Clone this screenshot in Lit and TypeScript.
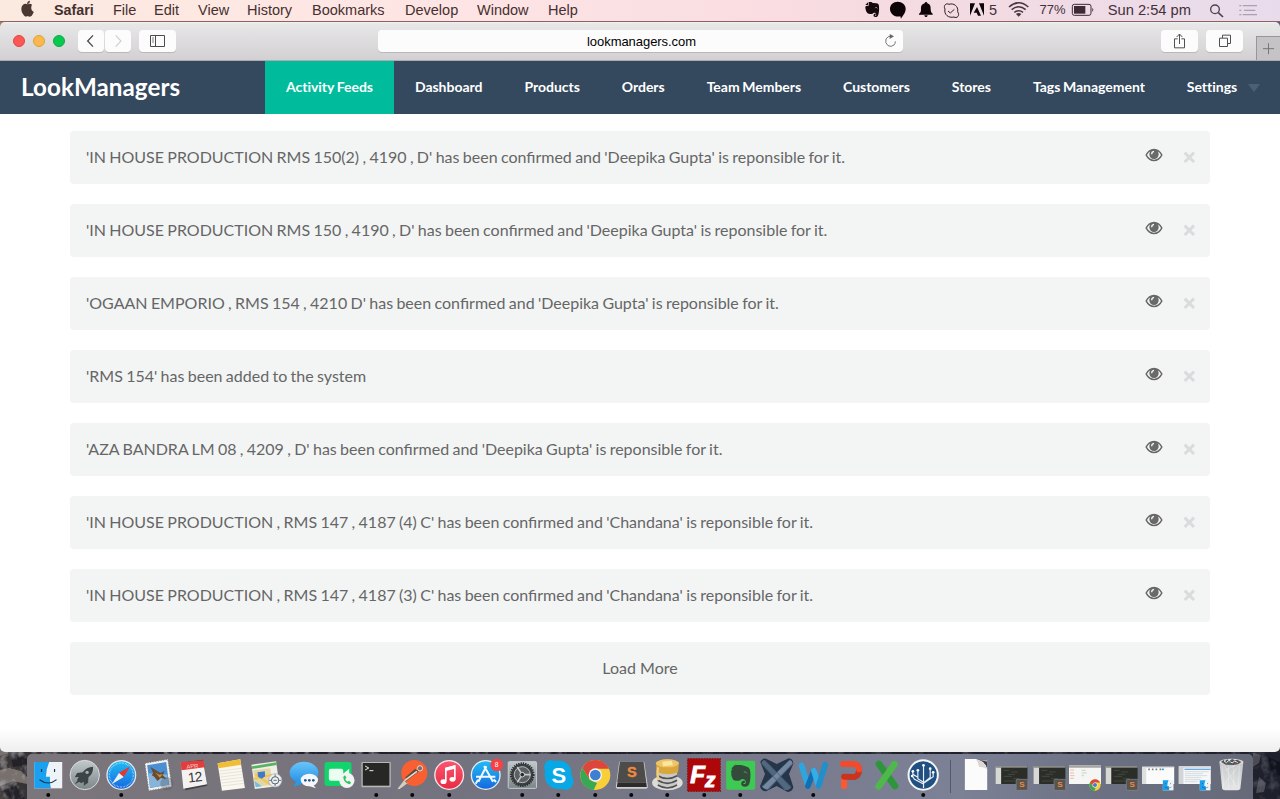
import { LitElement, html, svg, css, nothing } from "lit";
import { customElement } from "lit/decorators.js";

// Icon art is drawn on a grid of three units per pixel.
const U = 3;
const icon = (w: number, h: number, vx: number, vy: number, art: unknown) =>
  html`<svg width=${w} height=${h} viewBox="${vx} ${vy} ${w * U} ${h * U}">${art}</svg>`;

const menus: [string, number][] = [
  ["File", 41], ["Edit", 44], ["View", 49], ["History", 65], ["Bookmarks", 93],
  ["Develop", 72], ["Window", 71], ["Help", 40],
];

@customElement("mac-menubar")
class MacMenubar extends LitElement {
  static styles = css`
    :host { display: flex; height: 22px; box-sizing: border-box; border-bottom: 1px solid #8d6260;
      background: linear-gradient(90deg, #fbeae0 0, #fde8e2 200px, #fee4e5 480px, #f8dce1 800px, #f2dbe3 1000px, #e8dcec 1280px);
      font: 14.500px/20px "Liberation Sans", sans-serif; color: #45302f; white-space: nowrap; align-items: flex-start; }
    svg { display: block; flex: none; overflow: visible; }
    span { box-sizing: border-box; }
    .menu { flex: none; }
    .app { font-weight: bold; font-size: 14.300px; width: 59px; flex: none; }
    .spacer { flex: 1; }
    .status { display: flex; align-items: flex-start; width: 418px; flex: none; color: #44303a; }
    .count { width: 16px; padding-left: 2px; flex: none; }
    .pct { width: 31.700px; padding-left: 4.500px; font-size: 13px; flex: none; }
    .clock { width: 102.300px; padding-left: 7px; font-size: 14.700px; flex: none; }
  `;
  render() {
    return html`
      ${icon(54, 21, 0, 0, svg`<g fill="#4a3732"><path d="M96 14c-4-4-9-3-13-1-4-2-9-3-14 1-7 7-6 19 0 28 5 9 9 9 14 6 5 3 10 3 14-4 3-4 4-8 4-9-8-3-9-14-5-21z"/><path d="M81 12c0-6 4-10 9-10 0 6-4 10-9 10z"/></g>`)}
      <span class="app">Safari</span>
      ${menus.map(([t, w]) => html`<span class="menu" style="width:${w}px">${t}</span>`)}
      <span class="spacer"></span>
      <div class="status">
        ${icon(25, 21, 36, 0, svg`<path fill="#160a0b" d="M56 6h6c3 0 4 2 7 3l10 1c5 0 8 4 8 9 1 10 0 23-4 30-2 3-10 3-12 0-2-5 2-10 8-8v3c-4-1-5 2-3 3 4 1 4-5 1-8-4-2-7-1-9 2-4 2-12 1-16-2-4-5-6-12-6-19 1-3 5-3 10-3z"/><path fill="#160a0b" d="M46 15 54 7v8z"/><path d="M76 23q4-2 6 2" stroke="#f5dce0" stroke-width="2" fill="none"/>`)}
        ${icon(25, 21, 111, 0, svg`<path fill="#0d0507" d="M143 5c13 0 24 9 24 21 0 13-9 20-14 30l-2-7c-18 4-31-9-31-22 0-13 10-22 23-22z"/>`)}
        ${icon(26, 21, 186, 0, svg`<path fill="#0d0507" d="M228 6c2 0 4 2 4 4 9 3 10 9 10 17 0 8 2 11 6 14v3h-41v-3c5-3 6-6 6-14 0-8 1-14 11-17 0-2 2-4 4-4zm-5 40h10c0 7-10 7-10 0z"/>`)}
        ${icon(26, 21, 264, 0, svg`<path d="M285 27c-6-10 3-19 12-14 14-5 29 6 26 22 8 13-3 21-11 16-16 4-31-7-27-24zM294 33l7 6 12-11" fill="none" stroke="#2f2024" stroke-width="3"/>`)}
        ${icon(23, 21, 342, 0, svg`<path fill="#0d0507" d="M360 10h15l-15 37zm27 0h15v37zm-6 11 12 26h-9l-4-9h-9z"/>`)}
        <span class="count">5</span>
        ${icon(32, 21, 459, 0, svg`<g fill="none" stroke="#46343d" stroke-width="4.500"><path d="M477 21q29-25 58 0M485 29q21-18 42 0M493 37q13-10 26 0"/></g><path fill="#46343d" d="M498 42q8-6 16 0l-8 8z"/>`)}
        <span class="pct">77%</span>
        ${icon(34, 21, 650, 0, svg`<rect x="666" y="13" width="56" height="33" rx="6" fill="none" stroke="#3c2a34" stroke-width="3"/><rect x="671" y="18" width="34" height="23" fill="#3c2a34"/><path d="M726 24q6 5 0 11z" fill="#3c2a34"/>`)}
        <span class="clock">Sun 2:54 pm</span>
        ${icon(31, 21, 1059, 0, svg`<g fill="none" stroke="#51404d" stroke-width="4"><circle cx="1095" cy="28" r="13"/><path d="m1105 38 14 13" stroke-width="5"/></g>`)}
        ${icon(26, 21, 1152, 0, svg`<path d="M1168 17h6m4 0h43M1168 31h6m8 0h34M1168 44h6m4 0h43" stroke="#aca0b2" stroke-width="4"/>`)}
      </div>`;
  }
}

@customElement("safari-toolbar")
class SafariToolbar extends LitElement {
  static styles = css`
    :host { display: flex; align-items: flex-start; height: 39px; box-sizing: border-box; padding: 8px 0 0 13px; border-bottom: 1px solid #aeacae;
      background: linear-gradient(#f3f2f3 0, #e8e7e8 2px, #d2d0d2 38px); border-radius: 5px 5px 0 0; }
    svg { display: block; overflow: visible; }
    .lights { display: flex; gap: 8px; padding-top: 5px; width: 65px; }
    .light { width: 12px; height: 12px; border-radius: 50%; box-sizing: border-box; }
    .red { background: #fd5754; border: 1px solid #e0443f; }
    .amber { background: #fdb84b; border: 1px solid #dea03c; }
    .green { background: #08c950; border: 1px solid #0caa40; }
    .btn { height: 22px; background: #fcfcfc; border-radius: 4px; box-shadow: 0 1px 0 #bab8ba; flex: none; }
    .back { margin-right: 1px; }
    .side { margin-left: 8px; }
    .url { margin-left: 202px; width: 525px; display: flex; align-items: center; }
    .addr { flex: 1; text-align: center; padding-left: 33px; font: 13px/22px "Liberation Sans", sans-serif; color: #000; letter-spacing: -.05px; padding-top: 1px; }
    .share { margin-left: 258px; margin-right: 8px; }
    .plus { margin: 6px 0 0 13px; width: 24px; height: 24px; box-sizing: border-box; border: 1px solid #989698; border-width: 1px 0 0 1px; background: #c5c3c5; }
  `;
  render() {
    return html`
      <div class="lights"><i class="light red"></i><i class="light amber"></i><i class="light green"></i></div>
      <div class="btn back">${icon(26, 22, 234, 90, svg`<path d="m279 106-16 17 16 17" fill="none" stroke="#4b4b4b" stroke-width="4"/>`)}</div>
      <div class="btn">${icon(26, 22, 315, 90, svg`<path d="m347 106 16 17-16 17" fill="none" stroke="#cfcfcf" stroke-width="3.5"/>`)}</div>
      <div class="btn side">${icon(37, 22, 417, 90, svg`<path d="M451.500 106.500h42v33h-42zM466.500 106v34" fill="none" stroke="#4b4b4b" stroke-width="3"/><path d="M456 114h6m-6 6h6m-6 6h6" stroke="#666" stroke-width="2.500"/>`)}</div>
      <div class="btn url"><span class="addr">lookmanagers.com</span>
        ${icon(31, 22, 66, 90, svg`<path d="M124 109q-11-2-16 8-4 12 6 20 10 5 18-2 4-4 4-11" fill="none" stroke="#777" stroke-width="3"/><path d="m119 102 13 7-13 8z" fill="#666"/>`)}</div>
      <div class="btn share">${icon(37, 22, 933, 90, svg`<path d="M983 116.500h-9.500v27h30v-27H994M988.500 132v-29M980 111l8.500-9 8.500 9" fill="none" stroke="#505050" stroke-width="3"/>`)}</div>
      <div class="btn">${icon(37, 22, 1068, 90, svg`<path d="M1108.500 114.500h24v25h-24zM1117.500 114v-8.500h24v25h-9" fill="none" stroke="#505050" stroke-width="3"/>`)}</div>
      <div class="plus">${icon(23, 23, 1221, 111, svg`<path d="M1239 146h33M1255.500 129.500v33" stroke="#777" stroke-width="3"/>`)}</div>`;
  }
}

const tabs = ["Activity Feeds", "Dashboard", "Products", "Orders", "Team Members", "Customers", "Stores", "Tags Management", "Settings"];
const feeds = [
  "'IN HOUSE PRODUCTION RMS 150(2) , 4190 , D' has been confirmed and 'Deepika Gupta' is reponsible for it.",
  "'IN HOUSE PRODUCTION RMS 150 , 4190 , D' has been confirmed and 'Deepika Gupta' is reponsible for it.",
  "'OGAAN EMPORIO , RMS 154 , 4210 D' has been confirmed and 'Deepika Gupta' is reponsible for it.",
  "'RMS 154' has been added to the system",
  "'AZA BANDRA LM 08 , 4209 , D' has been confirmed and 'Deepika Gupta' is reponsible for it.",
  "'IN HOUSE PRODUCTION , RMS 147 , 4187 (4) C' has been confirmed and 'Chandana' is reponsible for it.",
  "'IN HOUSE PRODUCTION , RMS 147 , 4187 (3) C' has been confirmed and 'Chandana' is reponsible for it.",
];

@customElement("feed-page")
class FeedPage extends LitElement {
  static styles = css`
    :host { display: block; height: 691px; background: linear-gradient(#fff 0, #fff 668px, #eeeeee 691px); border-radius: 0 0 5px 5px; overflow: hidden;
      font-family: Lato, sans-serif; }
    nav { display: flex; height: 53px; background: #34495e; color: #fff; white-space: nowrap; }
    .brand { width: 244px; padding-left: 21px; font-size: 24.200px; line-height: 52px; font-weight: 700; letter-spacing: .06px; flex: none; }
    .tab { padding: 0 21px; font-size: 14px; line-height: 52px; font-weight: 700; letter-spacing: -.025px; word-spacing: -.7px; flex: none; }
    .active { background: #00bc9c; }
    .last { padding-right: 11px; }
    .caret { align-self: center; border: solid transparent; border-width: 8px 6px 0; border-top-color: #4b6075; }
    .list { display: flex; flex-direction: column; gap: 20px; padding: 17px 70px 0; }
    .row { height: 53px; box-sizing: border-box; border-radius: 4px; background: #f3f5f5; display: flex; align-items: flex-start; color: #666;
      font-size: 16px; line-height: 52px; padding-left: 16px; word-spacing: -.76px; }
    .text { flex: 1; white-space: nowrap; }
    .more { justify-content: center; padding: 0; word-spacing: 0; }
    svg { display: block; flex: none; }
  `;
  render() {
    return html`
      <nav><span class="brand">LookManagers</span>
        ${tabs.map((t, i) => html`<span class="tab ${i === 0 ? "active" : ""} ${i === tabs.length - 1 ? "last" : ""}">${t}</span>`)}
        <i class="caret"></i></nav>
      <div class="list">
        ${feeds.map((t) => html`<div class="row"><span class="text">${t}</span>
          ${icon(70, 53, 120, 33, svg`<path fill="#666" fill-rule="evenodd" d="M136 105q10-19 26-19t26 19q-10 19-26 19t-26-19zm5 0q8 14 21 14t21-14q-4-8-10-11 3 5 3 9a14 14 0 0 1-28 0q0-4 3-9-6 3-10 11z"/><circle cx="162" cy="102" r="11" fill="#6a6a6a"/><path d="M155 103q0-8 7-9" stroke="#f3f5f5" stroke-width="4" fill="none"/><path d="m254 98 28 28m0-28-28 28" stroke="#d9dcdc" stroke-width="9"/>`)}
        </div>`)}
        <div class="row more">Load More</div>
      </div>`;
  }
}

type Dock = { base: number; art: unknown; dot?: boolean };
const subBadge = (x: number) => svg`<rect x=${x} y="118" width="35" height="33" rx="3" fill="#555453" stroke="#8b8987" stroke-width="2"/><text x=${x + 17.5} y="142" font-size="24" font-weight="bold" text-anchor="middle" fill="#f58a32">S</text>`;
const editorWin = (x: number) => svg`<path d="M${x} 78h96v54h-96z" fill="#2b2d28"/><path d="M${x} 78h17v54h-17z" fill="#d7d7d5"/><path d="M${x} 78h96v5h-96z" fill="#8b8b88"/><path d="M${x + 24} 91h18m5 5h20m-30 7h22m-34 6h24m4 7h20m-48 7h34" stroke="#5d6650" stroke-width="1.500"/>${subBadge(x + 62)}`;
const chrome = (x: number, y: number, r: number) => svg`<g transform="translate(${x} ${y}) scale(${r / 45})"><circle r="45" fill="#f7cf3a"/><path d="M-39-22A45 45 0 0 1 41-19H0L-19 11z" fill="#df463b"/><path d="M-39-22-17 14 5 24-5 45A45 45 0 0 1-39-22z" fill="#37a853"/><circle r="20" fill="#f4f5f4"/><circle r="16" fill="#3d7fd3"/></g>`;
const finder = (x: number, y: number, s: number) => svg`<g transform="translate(${x} ${y}) scale(${s})"><path d="M0 0h84v79H0z" fill="#eef3f8"/><path d="M0 0h45q-10 22-10 44h12q-1 19 3 35H0z" fill="#1aa0ee"/><path d="M22 21v9M61 21v9M16 53q27 20 51 0" fill="none" stroke="#18354e" stroke-width="3.500"/></g>`;

const apps: Dock[] = [
  { base: 0, dot: true, art: finder(102, 66, 1) },
  { base: 0, art: svg`<circle cx="255" cy="105" r="44" fill="url(#silver)" stroke="#d6dadb" stroke-width="3"/><path d="M280 80q-20 1-31 17l-17 2-7 13 12-1-5 8 12 11 8-5v12l13-9 1-16q15-11 14-32z" fill="#3d4446"/><circle cx="262" cy="97" r="5" fill="#a6aeb0"/><path d="m236 117-11 16 18-10z" fill="#3d4446"/>` },
  { base: 0, dot: true, art: svg`<circle cx="363" cy="105" r="43" fill="url(#blue)" stroke="#e5e7ea" stroke-width="4"/><circle cx="363" cy="105" r="36" fill="none" stroke="#d3eefa" stroke-width="4" stroke-dasharray="1.500 3"/><path d="m390 79-34 20 14 12z" fill="#e8352f"/><path d="m335 132 21-33 14 12z" fill="#f1eeee"/>` },
  { base: 0, art: svg`<path d="m435 70 69-12 12 82-69 12z" fill="#f2f2ef"/><path d="m435 70 69-12 12 82-69 12z" fill="none" stroke="#77757e" stroke-width="3" stroke-dasharray="3 5"/><path d="m442 76 57-10 9 68-57 10z" fill="#4b8ed1"/><path d="m445 100 57 4 5 30-57 9z" fill="#87b5da"/><path d="m452 81 20 12 10 6 12-6-5 13 12 12-18-4-10 9-10-13-7-4 4-7z" fill="#6b4b2e"/><path d="m466 97 12 7 11-2-9 11z" fill="#c6904c"/><circle cx="501" cy="131" r="20" fill="#4d5565" opacity=".35"/>` },
  { base: 0, art: svg`<path d="m541 68 67-9 13 78-66 14z" fill="#454045"/><path d="m541 68 67-5 12 70-71 13z" fill="#f4f3f2"/><path d="m541 67 68-6 4 21-70 9z" fill="#e23c3b"/><g transform="rotate(-6 579 100)"><text x="578" y="84" font-size="17" text-anchor="middle" fill="#fbd8d5">APR</text><text x="582" y="126" font-size="41" text-anchor="middle" fill="#3a3838" letter-spacing="-2">12</text></g>` },
  { base: 0, art: svg`<path d="m653 70 68-12 14 86-69 8z" fill="#faf8ee"/><path d="m653 70 68-12 3 16-68 11z" fill="#f1bd35"/><path d="m659 93 66-8m-65 17 66-8m-64 17 66-8m-65 17 66-8m-64 17 66-8m-65 17 66-8" stroke="#d5d2c8" stroke-width="1.500"/>` },
  { base: 250, art: svg`<path d="m6 74 74-10 10 74-74 9z" fill="#f0eee7"/><path d="m7 79 74-12 1 8-74 12z" fill="#56b461"/><path d="m11 91 51-6 8 49-51 6z" fill="#e3d6a5"/><path d="m18 103 45 31m-50-17 54-13" stroke="#f4c352" stroke-width="6"/><path d="m14 122 23 17-18 3z" fill="#72bde3"/><path d="m24 97 22-3 1 15-11 7-10-6z" fill="#3e79cc"/><circle cx="77" cy="121" r="20" fill="#eceef0" stroke="#a5aaae" stroke-width="2"/><circle cx="77" cy="121" r="11" fill="none" stroke="#52606c" stroke-width="3"/><path d="M77 103v8m0 20v7m-18-17h8m20 0h8m-23 0h10" stroke="#65717c" stroke-width="3"/>` },
  { base: 250, art: svg`<ellipse cx="162" cy="98" rx="43" ry="33" fill="url(#sky)"/><path d="m141 121-10 20 29-11z" fill="#2e98e4"/><ellipse cx="178" cy="120" rx="26" ry="19" fill="#f5f7fa"/><path d="m188 133 10 12-21-7z" fill="#f5f7fa"/><g fill="#295989"><circle cx="166" cy="121" r="4"/><circle cx="178" cy="121" r="4"/><circle cx="190" cy="121" r="4"/></g>` },
  { base: 250, art: svg`<rect x="225" y="66" width="81" height="72" rx="8" fill="#11d56c"/><rect x="238" y="86" width="43" height="36" rx="6" fill="#eafff0"/><path d="m279 103 20-17v34z" fill="#eafff0"/><circle cx="292" cy="121" r="23" fill="#f2f4f3"/><path d="M281 111q2 18 19 22l5-5-7-6-4 3q-6-3-7-9l4-3-5-7z" fill="#2cc45f"/>` },
  { base: 250, dot: true, art: svg`<rect x="334" y="66" width="88" height="76" rx="3" fill="#b7b7b6"/><rect x="338" y="69" width="80" height="68" fill="#272726"/><path d="m345 78 11 6-11 6" fill="none" stroke="#eee" stroke-width="3"/><path d="M358 92h12" stroke="#eee" stroke-width="3"/>` },
  { base: 250, dot: true, art: svg`<circle cx="494" cy="99" r="39" fill="#fa5f32"/><circle cx="511" cy="85" r="8" fill="#74706e" stroke="#e4d9ce" stroke-width="3"/><path d="m505 92-33 25-20 27m17-29 30-26" fill="none" stroke="#574b48" stroke-width="7"/><path d="m502 94-32 24-22 28" fill="none" stroke="#e8dac5" stroke-width="5"/><path d="m465 119 10 9-20 16-12 4z" fill="#d8ccc1"/><path d="m467 123 6 5" stroke="#d35a2e" stroke-width="4"/>` },
  { base: 250, dot: true, art: svg`<circle cx="597" cy="105" r="43" fill="url(#music)" stroke="#f5e9ed" stroke-width="4"/><path d="M587 124V85l27-7v39" fill="none" stroke="#fff" stroke-width="5"/><path d="m587 83 27-7v10l-27 7z" fill="#fff"/><ellipse cx="580" cy="125" rx="9" ry="7" fill="#fff"/><ellipse cx="607" cy="118" rx="9" ry="7" fill="#fff"/>` },
  { base: 250, art: svg`<circle cx="708" cy="105" r="43" fill="url(#blue)" stroke="#e7edf2" stroke-width="4"/><path d="m710 79-24 46m17-47 27 47m-51-15h58m-52 9-7 12m54-13 7 8" stroke="#f3faff" stroke-width="6"/><circle cx="741" cy="75" r="19" fill="#f54244"/><text x="741" y="82" font-size="20" text-anchor="middle" fill="#fff">8</text>` },
  { base: 500, dot: true, art: svg`<rect x="24" y="65" width="85" height="80" rx="3" fill="url(#silver)" stroke="#c5cdd1" stroke-width="3"/><circle cx="66" cy="104" r="33" fill="#3b3f42"/><circle cx="66" cy="104" r="34" fill="none" stroke="#2b2e30" stroke-width="6" stroke-dasharray="4 3"/><circle cx="66" cy="104" r="24" fill="#5b6063" stroke="#b8bec0" stroke-width="3"/><path d="M66 104h25m-25 0-15-23m15 23-15 23" stroke="#c4c9cb" stroke-width="5"/><circle cx="66" cy="104" r="7" fill="#292b2c" stroke="#d1d4d5" stroke-width="3"/>` },
  { base: 500, dot: true, art: svg`<path d="M136 95C126 70 145 53 164 63c28-8 55 13 51 43 17 25-4 53-30 40-31 6-56-18-49-51z" fill="#08a7e6"/><text x="177" y="128" font-size="66" font-weight="bold" text-anchor="middle" fill="#fff">S</text>` },
  { base: 500, dot: true, art: chrome(285, 105, 45) },
  { base: 500, dot: true, art: svg`<path d="M358 65h75l11 75q0 6-6 6h-85q-5 0-5-6z" fill="#cfcfce"/><path d="M360 65h71l8 61h-87z" fill="#4d4c4b"/><path d="M353 127h86l2 14h-90z" fill="#2d2c2b"/><text x="396" y="110" font-size="44" font-weight="bold" text-anchor="middle" fill="#f18b3a" stroke="#f18b3a">S</text>` },
  { base: 500, dot: true, art: svg`<ellipse cx="504" cy="128" rx="46" ry="23" fill="#dddcd8"/><path d="M475 84h58v49q-29 21-58 0z" fill="#c9c9c7"/><path d="M475 107q29 17 58 0m-58 14q29 18 58 0m-58 14q29 18 58 0" fill="none" stroke="#505053" stroke-width="5"/><path d="M469 67q34-18 70 0l-3 30q-30 12-63 0z" fill="#d9a73b"/><ellipse cx="504" cy="70" rx="34" ry="12" fill="#eec467"/><path d="m488 65 29-3 4 14-30 3z" fill="#fae69c"/><path d="M476 82q-5 24 3 38" fill="none" stroke="#f3cf76" stroke-width="7"/>` },
  { base: 500, dot: true, art: svg`<rect x="563" y="56" width="98" height="98" fill="#ae0709" stroke="#89191c" stroke-width="4" stroke-dasharray="5 3"/><text x="571" y="129" font-size="72" font-weight="bold" font-style="italic" fill="#fff" stroke="#fff" stroke-width="3">F<tspan dy="12" font-size="62">z</tspan></text>` },
  { base: 500, dot: true, art: svg`<rect x="680" y="62" width="87" height="87" rx="6" fill="#3dc953"/><path d="M699 85 710 75h15q12 3 19 6 9 3 9 22 0 25-6 33-10 9-21 0-4-15 10-14l1 6q-8 0-4 4 7 0 6-7-1-7-9-8-5 0-8 4-9 4-21-2-7-10-6-25z" fill="#344b3b"/><path d="m695 86 13-13v13z" fill="#344b3b"/><path d="M733 96q6-3 9 4" fill="none" stroke="#6dbd79" stroke-width="2"/>` },
  { base: 750, art: svg`<path d="M31 67q3-13 17-11l32 16 36-17q13 1 14 16l-13 31 13 39q-2 13-17 15l-33-18-32 16q-15-1-18-15l15-37z" fill="#26364a"/><path d="M43 60q-8 2-9 11l70 79q15 2 20-10z" fill="#52687f"/><path d="M119 60q8 2 9 12l-72 76q-14 2-20-9z" fill="#7489a0"/><path d="m46 60 76 81M36 72l67 75m13-86-77 77m87-65-71 73" stroke="#3a4e64" stroke-width="2"/>` },
  { base: 750, dot: true, art: svg`<g fill="none" stroke-linecap="round" stroke-linejoin="round" stroke-width="17"><path d="m156 76 19 62" stroke="#2fa5e0"/><path d="m175 138 18-46" stroke="#116eb1"/><path d="m193 92 14 46" stroke="#35ade7"/><path d="m207 138 20-64" stroke="#218fcc"/></g>` },
  { base: 750, art: svg`<g fill="none" stroke-linecap="round" stroke-linejoin="round" stroke-width="18"><path d="M282 139v-26" stroke="#fa5934"/><path d="m282 110 32 1q13-5 13-23" stroke="#c8341e"/><path d="M279 72h30q17 1 18 16" stroke="#f34a2b"/></g>` },
  { base: 750, art: svg`<g fill="none" stroke-linecap="round" stroke-width="20"><path d="m388 72 48 66" stroke="#2d963a"/><path d="m434 73-47 66" stroke="#4eb84b"/></g>` },
  { base: 750, dot: true, art: svg`<circle cx="519" cy="105" r="44" fill="#205081" stroke="#f2f4f6" stroke-width="6"/><path d="M520 144V78m0 49-17-11V94m0 18-15-9v-9m32 35 20-17V89m-20 41 29-20v-13m-29 35-27-14-7-10" fill="none" stroke="#eaf0f5" stroke-width="3.500"/><g fill="#fff"><circle cx="520" cy="76" r="4"/><circle cx="503" cy="91" r="4"/><circle cx="488" cy="94" r="4"/><circle cx="540" cy="86" r="4"/><circle cx="549" cy="97" r="4"/><circle cx="486" cy="108" r="4"/></g>` },
];
const files: Dock[] = [
  { base: 750, art: svg`<path d="M644 57h67v93h-67z" fill="#fbfbfb"/><path d="M677 58h34v28q-5-22-34-28z" fill="#343d5d"/><path d="M677 58q7 8 9 23 14-2 25 7-6-23-34-30z" fill="#ddd7d1"/><path d="M685 59h26v6z" fill="#b5a98c"/>` },
  { base: 1000, art: editorWin(-13) },
  { base: 1000, art: editorWin(99) },
  { base: 1000, art: svg`<path d="M207 76h96v56h-96z" fill="#f5f5f4"/><path d="M207 76h96v7h-96z" fill="#a5a5a3"/><path d="M210 90h12m-12 9h12m-12 8h14m-14 8h12" stroke="#eec0a8" stroke-width="3"/><path d="M245 91h12m-12 8h15m-15 8h7" stroke="#99b39c" stroke-width="1.500"/>${chrome(285, 135, 17)}` },
  { base: 1000, art: editorWin(318) },
  { base: 1000, art: svg`<path d="M426 80h96v52h-96z" fill="#fbfbfb"/><path d="M426 80h96v4h-96zM426 84h12v48h-12z" fill="#dedfe0"/><path d="M444 88h5m6 0h5m6 0h5m7 0h5" stroke="#7d8083" stroke-width="5"/><path d="M485 88h6" stroke="#3c99d9" stroke-width="5"/>${finder(488, 121, 0.38)}` },
  { base: 1000, art: svg`<path d="M537 79h96v53h-96z" fill="#f6f7f8"/><path d="M537 79h96v4h-96zM537 83h14v49h-14z" fill="#d2d5d8"/><path d="M554 88h78" stroke="#6ea9e2" stroke-width="4"/><path d="M555 95h72m-72 6h55m-55 6h67m-67 6h50m-50 6h46m-46 6h38" stroke="#b6c0c9" stroke-width="1.500"/>${finder(600, 121, 0.38)}` },
  { base: 1000, art: svg`<path d="m657 65 8 80q1 6 9 6h37q8 0 9-6l9-80z" fill="url(#bin)"/><path d="m666 76 3 66m15-65v68m16-68v68m17-69-3 66m-42-66 35 65m8-64-46 59m5-45 38-19" stroke="#fff" stroke-opacity=".45" stroke-width="2" fill="none"/><ellipse cx="693" cy="66" rx="36" ry="10" fill="#dcdddd"/><path d="m662 66 7-6 5 4 6-6 8 4 7-5 9 4 7-2 12 7-10 7-14 2-23-1z" fill="#55565a"/><path d="m671 63 7 5 8-7 9 8 8-6 9 5" fill="none" stroke="#eee" stroke-width="3"/><path d="m678 70 6-3m20 4 4-5" stroke="#a35357" stroke-width="3"/><path d="m687 68 5-3" stroke="#2da197" stroke-width="4"/>` },
];

@customElement("mac-dock")
class MacDock extends LitElement {
  static styles = css`
    :host { display: flex; width: 1226px; height: 45px; box-sizing: border-box; padding-left: 2.770px; border-radius: 5px 5px 0 0;
      background: linear-gradient(90deg, #7b767b 0, #78747c 15%, #73737f 35%, #777888 55%, #7c8196 76%, #6b7082 88%, #666a78 100%); font-family: "Liberation Sans", sans-serif; }
    svg { display: block; overflow: visible; flex: none; }
    .defs { width: 0; height: 0; }
    .sep { width: 1px; height: 33px; margin: 6px 7px 0 8.500px; background: #555969; flex: none; }
  `;
  private cell(d: Dock, left: number) {
    const vx = (left - d.base) * U;
    return icon(36.46, 45, vx, 42, svg`${d.art}${d.dot ? svg`<circle cx=${vx + 54.7} cy="165" r="6" fill="#08080b"/>` : nothing}`);
  }
  render() {
    const grad = (id: string, a: string, b: string) => svg`<linearGradient id=${id} x2="0" y2="1"><stop stop-color=${a}/><stop offset="1" stop-color=${b}/></linearGradient>`;
    return html`<svg class="defs"><defs>${grad("silver", "#c1c9cb", "#7c8588")}${grad("blue", "#20bdf5", "#1668de")}${grad("sky", "#6bc4fa", "#2290e5")}${grad("music", "#fb5670", "#e92b43")}${grad("bin", "#c5c6c8", "#e5e6e7")}</defs></svg>
      ${apps.map((d, i) => this.cell(d, 29.77 + 36.46 * i))}<i class="sep"></i>${files.map((d, i) => this.cell(d, 957.8 + 36.4 * i))}`;
  }
}

@customElement("app-root")
class AppRoot extends LitElement {
  static styles = css`
    :host { display: flex; flex-direction: column; width: 1280px; height: 799px; overflow: hidden; position: relative; z-index: 0;
      background: linear-gradient(90deg, #3c3736 0, #353236 30px, #211f29 120px, #20212c 1240px, #1d202c 1280px); }
    .rocks { position: absolute; left: 0; bottom: 0; z-index: -1; display: block; }
    .desk { flex: 1; display: flex; justify-content: center; align-items: flex-end; }
    mac-menubar, safari-toolbar, feed-page, mac-dock { flex: none; }
    .window { flex: none; background: linear-gradient(90deg, #a37c6a, #9b6a6a 50%, #6b5578) no-repeat 0 0 / 100% 10px; }
  `;
  render() {
    return html`
      <svg class="rocks" width="1280" height="54" viewBox="0 745 1280 54">
        <defs><filter id="grain" x="0" y="0" width="1" height="1"><feTurbulence type="fractalNoise" baseFrequency=".13 .1" numOctaves="3" seed="8"/><feColorMatrix values="0 0 0 0 .5  0 0 0 0 .5  0 0 0 0 .54  3 0 0 0 -1.400"/></filter></defs>
        <path d="m0 770 9-2 12 3 6 6v7l-14-3-13 5zM0 745h6l2 8-8 3z" fill="#77706d"/>
        <path d="m10 753 17 4v8l-14 2zM3 791l13-6 9 14H9z" fill="#232228"/>
        <path d="m1253 753 8 2-2 8-6 4zm6 24 7 6-2 9-8 1z" fill="#4b4b55"/>
        <path d="m1268 757 12 5v14l-9-4z" fill="#12141d"/>
        <rect y="745" width="640" height="54" filter="url(#grain)" opacity=".5"/>
        <rect x="640" y="745" width="640" height="54" filter="url(#grain)" opacity=".22"/>
      </svg>
      <mac-menubar></mac-menubar>
      <div class="window"><safari-toolbar></safari-toolbar><feed-page></feed-page></div>
      <div class="desk"><mac-dock></mac-dock></div>`;
  }
}
